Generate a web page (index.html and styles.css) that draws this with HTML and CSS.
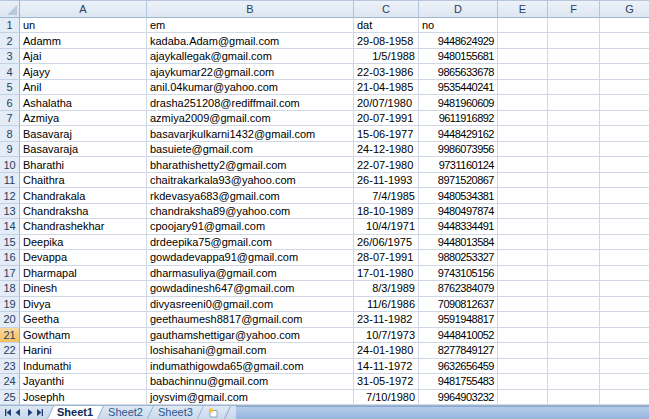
FILE: index.html
```html
<!DOCTYPE html>
<html>
<head>
<meta charset="utf-8">
<link rel="stylesheet" href="styles.css">
</head>
<body>
<div class="sheet">
  <div class="corner"><span class="tri"></span></div>
  <div class="ch">A</div><div class="ch">B</div><div class="ch">C</div><div class="ch">D</div><div class="ch">E</div><div class="ch">F</div><div class="ch">G</div>

  <div class="rh">1</div><div class="c">un</div><div class="c">em</div><div class="c">dat</div><div class="c">no</div><div class="c"></div><div class="c"></div><div class="c"></div>
  <div class="rh">2</div><div class="c">Adamm</div><div class="c">kadaba.Adam@gmail.com</div><div class="c">29-08-1958</div><div class="c n">9448624929</div><div class="c"></div><div class="c"></div><div class="c"></div>
  <div class="rh">3</div><div class="c">Ajai</div><div class="c">ajaykallegak@gmail.com</div><div class="c r">1/5/1988</div><div class="c n">9480155681</div><div class="c"></div><div class="c"></div><div class="c"></div>
  <div class="rh">4</div><div class="c">Ajayy</div><div class="c">ajaykumar22@gmail.com</div><div class="c">22-03-1986</div><div class="c n">9865633678</div><div class="c"></div><div class="c"></div><div class="c"></div>
  <div class="rh">5</div><div class="c">Anil</div><div class="c">anil.04kumar@yahoo.com</div><div class="c">21-04-1985</div><div class="c n">9535440241</div><div class="c"></div><div class="c"></div><div class="c"></div>
  <div class="rh">6</div><div class="c">Ashalatha</div><div class="c">drasha251208@rediffmail.com</div><div class="c">20/07/1980</div><div class="c n">9481960609</div><div class="c"></div><div class="c"></div><div class="c"></div>
  <div class="rh">7</div><div class="c">Azmiya</div><div class="c">azmiya2009@gmail.com</div><div class="c">20-07-1991</div><div class="c n">9611916892</div><div class="c"></div><div class="c"></div><div class="c"></div>
  <div class="rh">8</div><div class="c">Basavaraj</div><div class="c">basavarjkulkarni1432@gmail.com</div><div class="c">15-06-1977</div><div class="c n">9448429162</div><div class="c"></div><div class="c"></div><div class="c"></div>
  <div class="rh">9</div><div class="c">Basavaraja</div><div class="c">basuiete@gmail.com</div><div class="c">24-12-1980</div><div class="c n">9986073956</div><div class="c"></div><div class="c"></div><div class="c"></div>
  <div class="rh">10</div><div class="c">Bharathi</div><div class="c">bharathishetty2@gmail.com</div><div class="c">22-07-1980</div><div class="c n">9731160124</div><div class="c"></div><div class="c"></div><div class="c"></div>
  <div class="rh">11</div><div class="c">Chaithra</div><div class="c">chaitrakarkala93@yahoo.com</div><div class="c">26-11-1993</div><div class="c n">8971520867</div><div class="c"></div><div class="c"></div><div class="c"></div>
  <div class="rh">12</div><div class="c">Chandrakala</div><div class="c">rkdevasya683@gmail.com</div><div class="c r">7/4/1985</div><div class="c n">9480534381</div><div class="c"></div><div class="c"></div><div class="c"></div>
  <div class="rh">13</div><div class="c">Chandraksha</div><div class="c">chandraksha89@yahoo.com</div><div class="c">18-10-1989</div><div class="c n">9480497874</div><div class="c"></div><div class="c"></div><div class="c"></div>
  <div class="rh">14</div><div class="c">Chandrashekhar</div><div class="c">cpoojary91@gmail.com</div><div class="c r">10/4/1971</div><div class="c n">9448334491</div><div class="c"></div><div class="c"></div><div class="c"></div>
  <div class="rh">15</div><div class="c">Deepika</div><div class="c">drdeepika75@gmail.com</div><div class="c">26/06/1975</div><div class="c n">9448013584</div><div class="c"></div><div class="c"></div><div class="c"></div>
  <div class="rh">16</div><div class="c">Devappa</div><div class="c">gowdadevappa91@gmail.com</div><div class="c">28-07-1991</div><div class="c n">9880253327</div><div class="c"></div><div class="c"></div><div class="c"></div>
  <div class="rh">17</div><div class="c">Dharmapal</div><div class="c">dharmasuliya@gmail.com</div><div class="c">17-01-1980</div><div class="c n">9743105156</div><div class="c"></div><div class="c"></div><div class="c"></div>
  <div class="rh">18</div><div class="c">Dinesh</div><div class="c">gowdadinesh647@gmail.com</div><div class="c r">8/3/1989</div><div class="c n">8762384079</div><div class="c"></div><div class="c"></div><div class="c"></div>
  <div class="rh">19</div><div class="c">Divya</div><div class="c">divyasreeni0@gmail.com</div><div class="c r">11/6/1986</div><div class="c n">7090812637</div><div class="c"></div><div class="c"></div><div class="c"></div>
  <div class="rh">20</div><div class="c">Geetha</div><div class="c">geethaumesh8817@gmail.com</div><div class="c">23-11-1982</div><div class="c n">9591948817</div><div class="c"></div><div class="c"></div><div class="c"></div>
  <div class="rh sel">21</div><div class="c">Gowtham</div><div class="c">gauthamshettigar@yahoo.com</div><div class="c r">10/7/1973</div><div class="c n">9448410052</div><div class="c"></div><div class="c"></div><div class="c"></div>
  <div class="rh">22</div><div class="c">Harini</div><div class="c">loshisahani@gmail.com</div><div class="c">24-01-1980</div><div class="c n">8277849127</div><div class="c"></div><div class="c"></div><div class="c"></div>
  <div class="rh">23</div><div class="c">Indumathi</div><div class="c">indumathigowda65@gmail.com</div><div class="c">14-11-1972</div><div class="c n">9632656459</div><div class="c"></div><div class="c"></div><div class="c"></div>
  <div class="rh">24</div><div class="c">Jayanthi</div><div class="c">babachinnu@gmail.com</div><div class="c">31-05-1972</div><div class="c n">9481755483</div><div class="c"></div><div class="c"></div><div class="c"></div>
  <div class="rh">25</div><div class="c">Josephh</div><div class="c">joysvim@gmail.com</div><div class="c r">7/10/1980</div><div class="c n">9964903232</div><div class="c"></div><div class="c"></div><div class="c"></div>
</div>
<div class="tabbar">
  <div class="nav">
    <svg width="44" height="9" viewBox="0 0 44 9">
      <g fill="#1f3f72">
        <rect x="3" y="1" width="1.3" height="7"/><path d="M9 1 L4.5 4.5 L9 8Z"/>
        <path d="M18 1 L13.5 4.5 L18 8Z"/>
        <path d="M26 1 L30.5 4.5 L26 8Z"/>
        <path d="M35 1 L39.5 4.5 L35 8Z"/><rect x="39.7" y="1" width="1.3" height="7"/>
      </g>
    </svg>
  </div>
  <div class="tabs">
    <div class="tab active">Sheet1</div>
    <div class="tab">Sheet2</div>
    <div class="tab">Sheet3</div>
    <div class="tab ins">
      <svg width="14" height="10" viewBox="0 0 14 10">
        <path d="M3 2.5 H10 V9 H3Z" fill="#fff" stroke="#8aa4c6" stroke-width="1"/>
        <circle cx="4" cy="2.5" r="2.2" fill="#f5c242"/>
      </svg>
    </div>
  </div>
  <div class="hbar"></div>
</div>
</body>
</html>
```
FILE: styles.css
```css
html, body {
  margin: 0;
  padding: 0;
  background: #ffffff;
  overflow: hidden;
}
body {
  width: 649px;
  height: 419px;
  font-family: "Liberation Sans", Arial, sans-serif;
  font-size: 11px;
  color: #000;
}
.sheet {
  display: grid;
  grid-template-columns: 20px 127px 207px 65px 79px 50px 52px 60px;
  grid-template-rows: 18px repeat(25, 1fr);
  height: 405px;
  width: 660px;
  overflow: hidden;
}
.corner {
  position: relative;
  background: linear-gradient(#e9eff8, #dce5f1);
  border-top: 1px solid #b7c8de;
  border-right: 1px solid #9eb6ce;
  border-bottom: 1px solid #9eb6ce;
  box-sizing: border-box;
}
.corner .tri {
  position: absolute;
  right: 2px;
  bottom: 2px;
  width: 0;
  height: 0;
  border-left: 10px solid transparent;
  border-bottom: 10px solid #b9c8dc;
}
.ch {
  background: linear-gradient(#edf2f9, #dde6f1);
  border-top: 1px solid #b7c8de;
  border-right: 1px solid #b3c5dc;
  border-bottom: 1px solid #9eb6ce;
  box-sizing: border-box;
  color: #27415f;
  text-align: center;
  line-height: 16px;
  font-size: 11px;
}
.rh {
  background: #e4ecf7;
  border-right: 1px solid #9eb6ce;
  border-bottom: 1px solid #c5d2e3;
  box-sizing: border-box;
  color: #27415f;
  text-align: center;
  display: flex;
  align-items: center;
  justify-content: center;
  font-size: 11px;
}
.rh.sel {
  background: linear-gradient(#f9d99f, #f1c15f);
  border-right-color: #c2a15c;
}
.c {
  border-right: 1px solid #d0d7e5;
  border-bottom: 1px solid #d0d7e5;
  box-sizing: border-box;
  padding: 0 3px;
  display: flex;
  align-items: center;
  white-space: nowrap;
  overflow: visible;
  min-width: 0;
}
.c.r {
  justify-content: flex-end;
}
.c.n {
  justify-content: flex-end;
  letter-spacing: -0.5px;
}
.tabbar {
  display: flex;
  height: 14px;
  background: linear-gradient(#dbe6f4, #c7d7ec);
  border-top: 1px solid #9eb6ce;
  box-sizing: border-box;
  align-items: stretch;
}
.nav {
  width: 46px;
  display: flex;
  align-items: center;
  padding-left: 2px;
}
.tabs {
  display: flex;
  align-items: stretch;
  isolation: isolate;
}
.tab {
  position: relative;
  font-size: 11px;
  color: #2a5790;
  padding: 0 6px 0 9px;
  line-height: 13px;
}
.tab::before {
  content: "";
  position: absolute;
  top: 0;
  bottom: 0;
  left: 2px;
  right: -2px;
  background: linear-gradient(#dfe9f5, #cad9ed);
  border-right: 1px solid #8ea9cc;
  transform: skewX(-25deg);
  z-index: -1;
}
.tab.active {
  color: #0f2a55;
  font-weight: bold;
  z-index: 1;
}
.tab.active::before {
  background: #ffffff;
  border-left: 1px solid #8ea9cc;
  transform: skewX(-25deg);
}
.tab.ins {
  padding: 0 5px 0 8px;
  display: flex;
  align-items: center;
}
.hbar {
  flex: 1;
  margin-left: 10px;
  background: linear-gradient(#b6cdea, #96b5de);
  border-top: 1px solid #86a6d2;
}
```
